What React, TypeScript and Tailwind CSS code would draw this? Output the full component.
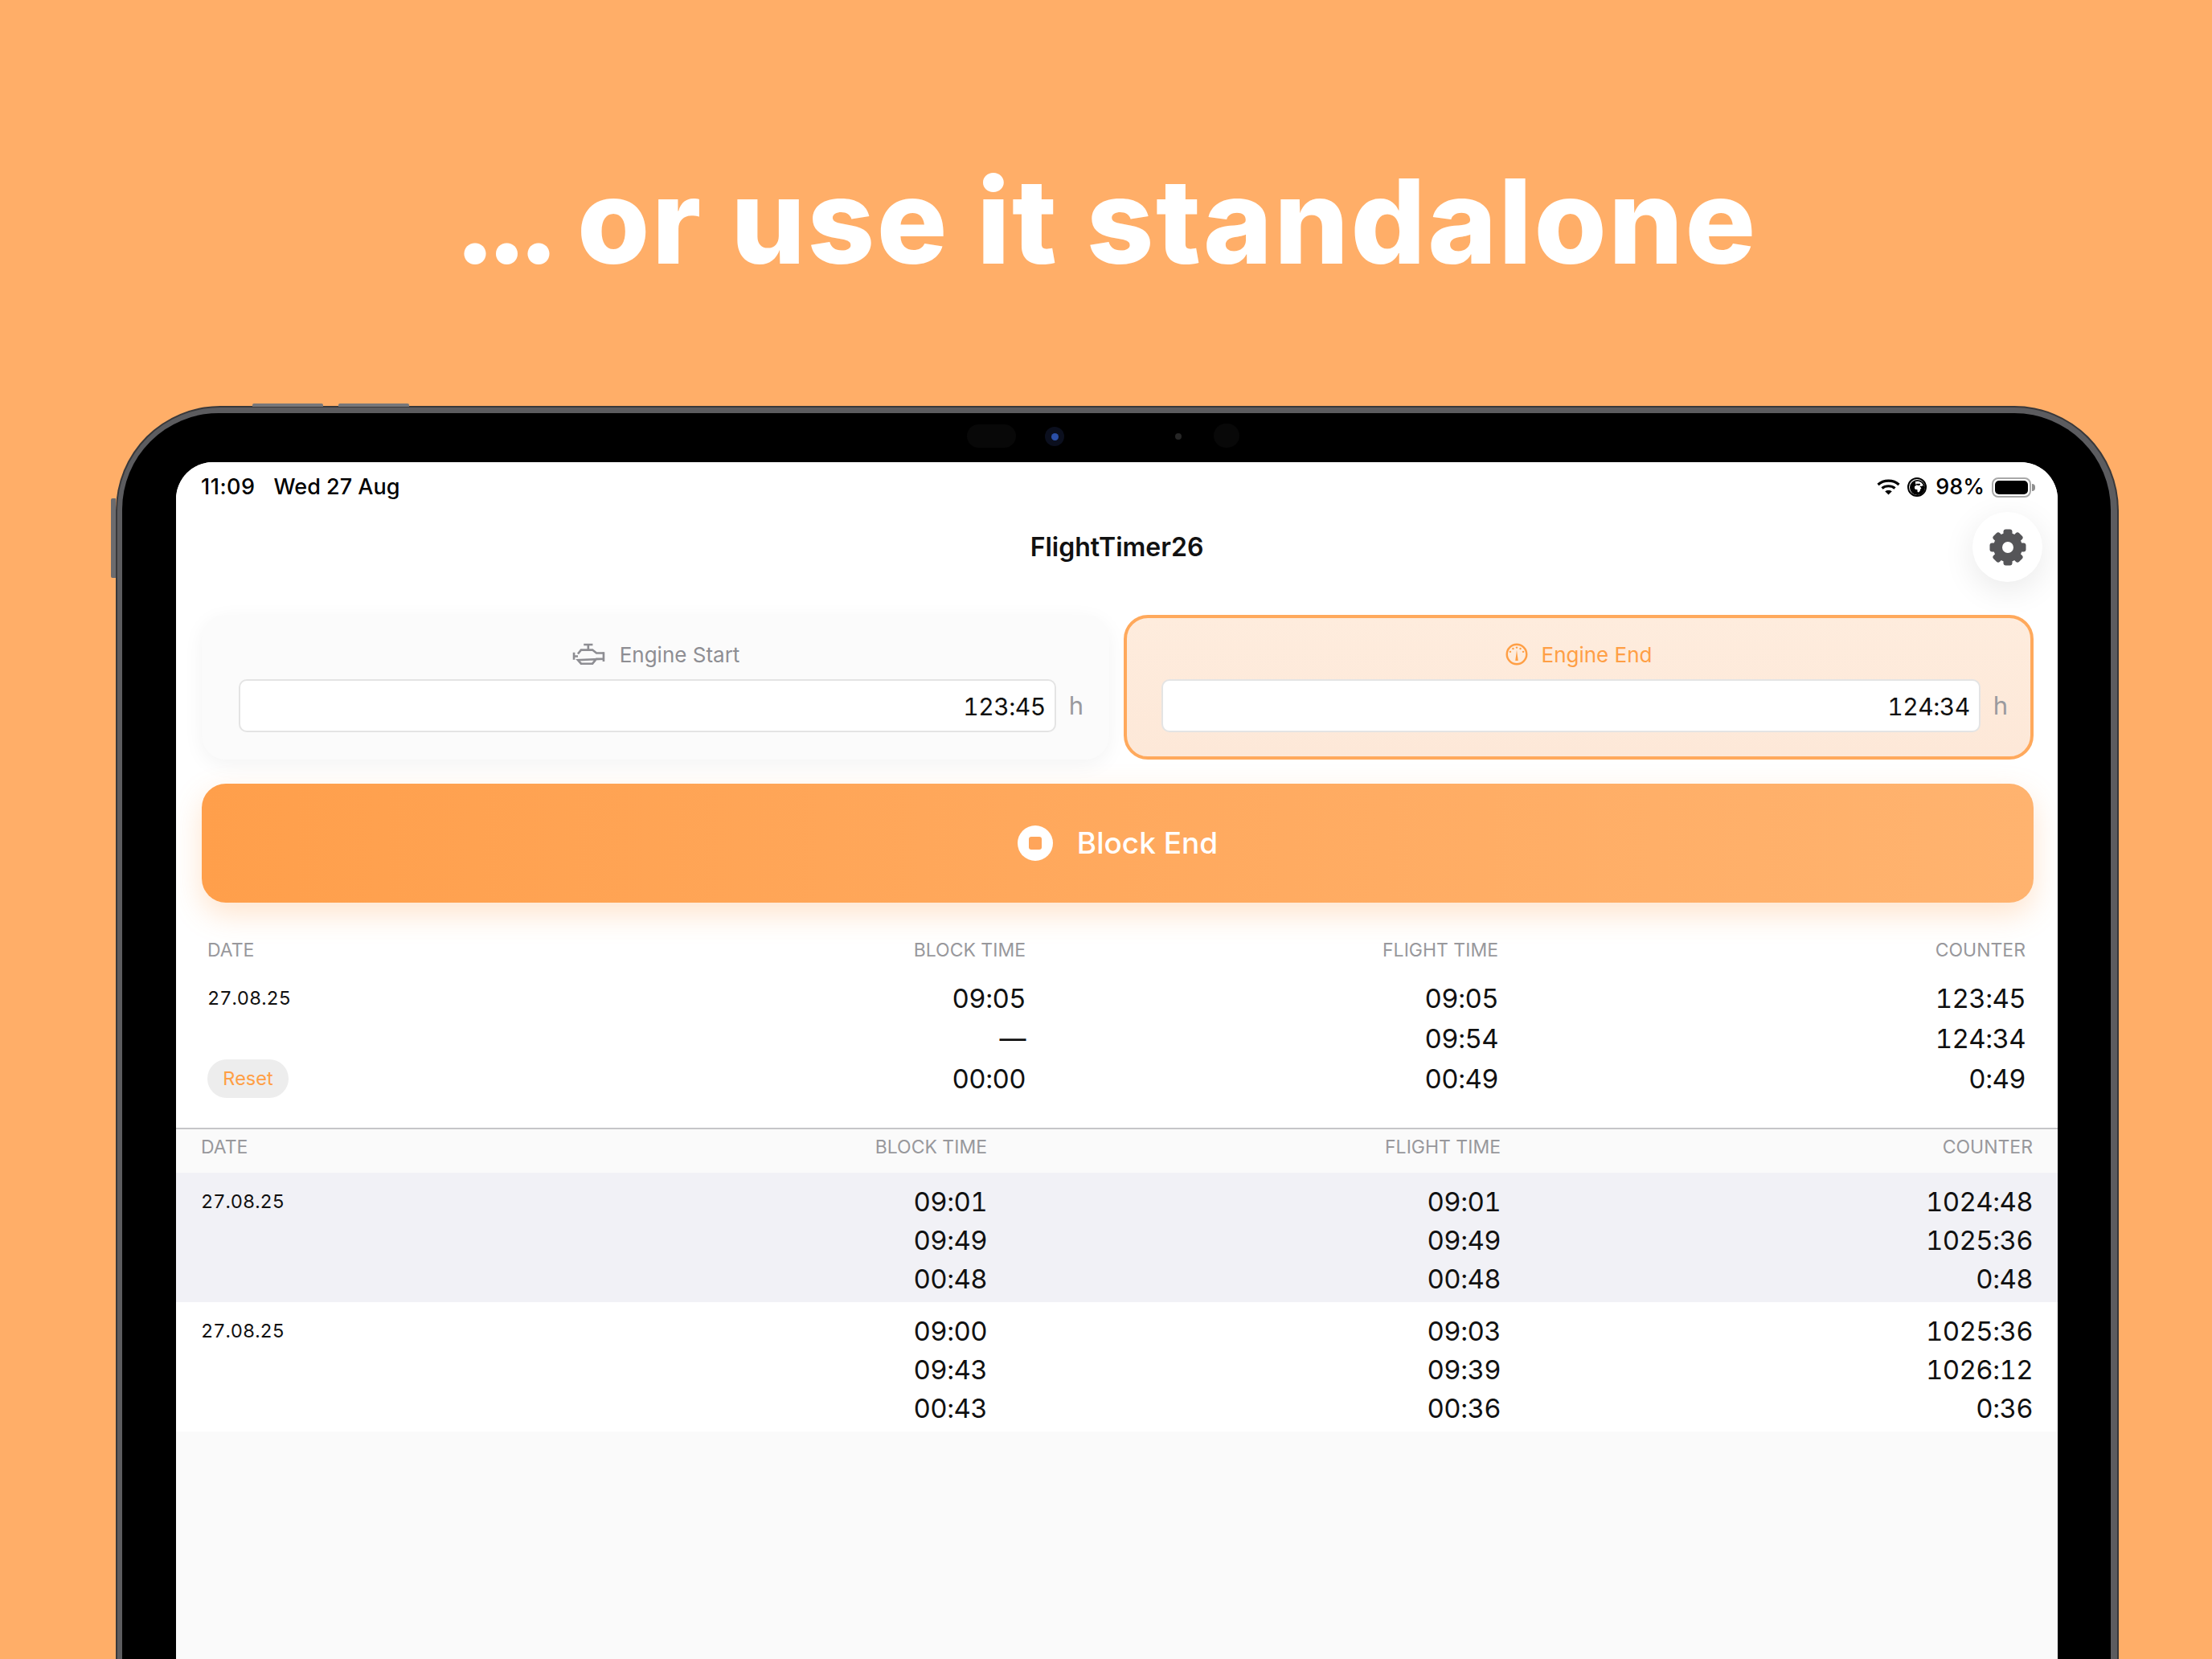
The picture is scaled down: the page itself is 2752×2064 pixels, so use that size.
import type { ReactNode } from "react";
import { FaEarthAfrica } from "react-icons/fa6";

const sans = "font-['Inter','Liberation_Sans',sans-serif]";

const liveRows = [
  ["09:05", "09:05", "123:45"],
  ["—", "09:54", "124:34"],
  ["00:00", "00:49", "0:49"],
];

const logRows = [
  {
    date: "27.08.25",
    shaded: true,
    rows: [
      ["09:01", "09:01", "1024:48"],
      ["09:49", "09:49", "1025:36"],
      ["00:48", "00:48", "0:48"],
    ],
  },
  {
    date: "27.08.25",
    shaded: false,
    rows: [
      ["09:00", "09:03", "1025:36"],
      ["09:43", "09:39", "1026:12"],
      ["00:43", "00:36", "0:36"],
    ],
  },
];

const EngineIcon = () => (
  <svg width="43" height="29" viewBox="36 14 130 88" fill="none" stroke="#8e8e93" strokeWidth="8">
    <path d="M82 20H116M99 20V40M45 50V77M45 64H60M157 48V84" />
    <path d="M60 55L72 40H115L130 52H157M157 74H130L115 92H72L60 78Z" />
  </svg>
);

const GaugeIcon = () => (
  <svg width="28" height="28" viewBox="40 35 80 80" fill="#ff9f45">
    <circle cx="80" cy="75" r="35" fill="none" stroke="#ff9f45" strokeWidth="7" />
    <circle cx="57" cy="66" r="3.5" />
    <circle cx="67" cy="55" r="3.5" />
    <circle cx="80" cy="51" r="3.5" />
    <circle cx="93" cy="55" r="3.5" />
    <circle cx="103" cy="66" r="3.5" />
    <polygon points="80,60 85,98 75,98" />
  </svg>
);

const GearIcon = () => (
  <svg width="46" height="46" viewBox="0 0 46 46" fill="#555558">
    {[0, 45, 90, 135, 180, 225, 270, 315].map((a) => (
      <rect key={a} x="17.5" y="0.5" width="11" height="12" rx="3" transform={`rotate(${a} 23 23)`} />
    ))}
    <circle cx="23" cy="23" r="12.5" fill="none" stroke="#555558" strokeWidth="11" />
  </svg>
);

const WifiIcon = () => (
  <svg width="29" height="20" viewBox="0 0 29 20" fill="none" stroke="#000" strokeWidth="3.2">
    <path d="M1.5 7C8.5 0.5 20.5 0.5 27.5 7" />
    <path d="M6.5 11.5C10.5 7.8 18.5 7.8 22.5 11.5" />
    <path d="M14.5 19.5L10.2 15.2C12.5 13.6 16.5 13.6 18.8 15.2Z" fill="#000" stroke="none" />
  </svg>
);

const Battery = () => (
  <div className="flex items-center">
    <div className="w-[49px] h-[25px] rounded-[8px] border-2 border-[#a8a8a8] p-[2px]">
      <div className="w-full h-full rounded-[5px] bg-black" />
    </div>
    <div className="w-[4px] h-[9px] rounded-r-full bg-[#8e8e8e] ml-[1px]" />
  </div>
);

const EngineCard = ({
  label,
  value,
  icon,
  active,
}: {
  label: string;
  value: string;
  icon: ReactNode;
  active?: boolean;
}) => (
  <div
    className={
      active
        ? "flex flex-col rounded-[30px] border-[4px] border-[#ffa95c] bg-gradient-to-b from-[#feecdd] to-[#fde8d8] pl-[43px] pr-[28px] pt-[31px]"
        : "flex flex-col rounded-[30px] bg-[#fbfbfb] shadow-[0_6px_26px_rgba(0,0,0,0.05)] pl-[46px] pr-[32px] pt-[35px]"
    }
  >
    <div
      className={`flex items-center justify-center gap-[17px] h-[28px] text-[26px] ${
        active ? "text-[#ff9f45] pr-[15px]" : "text-[#8e8e93] pr-[14px]"
      }`}
    >
      {icon}
      <span>{label}</span>
    </div>
    <div className="flex items-center gap-[16px] mt-[17px]">
      <div className="flex-1 h-[66px] flex items-center justify-end pt-[2px] pr-[11px] rounded-[10px] border-2 border-[#e4e4e4] bg-white text-[30px] tracking-[-0.5px] tabular-nums text-[#111]">
        {value}
      </div>
      <span className="text-[31px] text-[#9a9a9e]">h</span>
    </div>
  </div>
);

const Header = ({ cols }: { cols: string }) => (
  <div className={`grid ${cols} text-[23px] leading-[30px] text-[#98989c]`}>
    <span>DATE</span>
    <span className="text-right">BLOCK TIME</span>
    <span className="text-right">FLIGHT TIME</span>
    <span className="text-right">COUNTER</span>
  </div>
);

export default function App() {
  const liveCols = "grid-cols-[400px_618px_588px_656px]";
  const logCols = "grid-cols-[400px_578px_639px_662px]";

  return (
    <div className={`w-[2752px] h-[2064px] overflow-hidden bg-[#ffae68] flex flex-col ${sans}`}>
      <div className="h-[505px] shrink-0 flex justify-center pt-[177px]">
        <h1 className="text-[146px] leading-[196px] font-extrabold tracking-[2.5px] text-white h-[196px] whitespace-nowrap">
          <span className="tracking-[-12px]">...</span> or use it standalone
        </h1>
      </div>

      <div className="relative ml-[144px] w-[2492px] flex-1 flex flex-col rounded-t-[130px] bg-[#5c5c5f] border-2 border-b-0 border-[#38383a] pl-[6px] pr-[8px] pt-[7px]">
        {/* hardware buttons and camera */}
        <div className="absolute -top-[5px] left-[168px] w-[88px] h-[4px] rounded-t-[2px] bg-[#77777a]" />
        <div className="absolute -top-[5px] left-[275px] w-[88px] h-[4px] rounded-t-[2px] bg-[#77777a]" />
        <div className="absolute top-[113px] -left-[8px] w-[6px] h-[99px] rounded-l-[2px] bg-[#6b6b6e]" />

        <div className="relative flex-1 flex flex-col rounded-t-[120px] bg-black pl-[67px] pr-[66px] pt-[61px]">
          <div className="absolute top-[14px] left-[1051px] w-[61px] h-[29px] rounded-full bg-[#080808]" />
          <div className="absolute top-[17px] left-[1148px] w-[24px] h-[24px] rounded-full bg-[#0b0f1e] flex items-center justify-center">
            <div className="w-[9px] h-[9px] rounded-full bg-[#2b4fa8]" />
          </div>
          <div className="absolute top-[25px] left-[1310px] w-[8px] h-[8px] rounded-full bg-[#262626]" />
          <div className="absolute top-[13px] left-[1358px] w-[32px] h-[30px] rounded-full bg-[#080808]" />

          <div className="flex-1 flex flex-col overflow-hidden rounded-t-[46px] bg-[#fafafa]">
            <div className="bg-white">
              {/* status bar */}
              <div className="h-[62px] flex items-center justify-between pl-[31px] pr-[28px] text-[27px] font-medium text-black">
                <div className="flex gap-[23px]">
                  <span className="tracking-[0.5px]">11:09</span>
                  <span>Wed 27 Aug</span>
                </div>
                <div className="flex items-center">
                  <WifiIcon />
                  <div className="ml-[9px] w-[24px] h-[24px] rounded-full border-2 border-black flex items-center justify-center">
                    <FaEarthAfrica size={19} />
                  </div>
                  <span className="ml-[11px] mr-[9px]">98%</span>
                  <Battery />
                </div>
              </div>

              {/* nav bar */}
              <div className="relative h-[88px] flex items-center justify-center">
                <span className="text-[32px] font-semibold text-[#111]">FlightTimer26</span>
                <button className="absolute right-[19px] top-0 w-[87px] h-[87px] rounded-full bg-white shadow-[0_10px_40px_rgba(0,0,0,0.09)] flex items-center justify-center">
                  <GearIcon />
                </button>
              </div>

              {/* engine cards */}
              <div className="grid grid-cols-[1129px_1132px] gap-[18px] h-[180px] mt-[40px] pl-[32px] pr-[30px]">
                <EngineCard label="Engine Start" value="123:45" icon={<EngineIcon />} />
                <EngineCard label="Engine End" value="124:34" icon={<GaugeIcon />} active />
              </div>

              <div className="pl-[32px] pr-[30px] mt-[30px]">
                <button className="w-full h-[148px] rounded-[30px] bg-gradient-to-r from-[#ff9f4b] to-[#ffb36f] shadow-[0_14px_36px_rgba(255,159,74,0.28)] flex items-center justify-center gap-[30px] text-white text-[37px] font-medium">
                  <span className="w-[44px] h-[44px] rounded-full bg-white flex items-center justify-center">
                    <span className="w-[16px] h-[16px] rounded-[3px] bg-[#ffa55a]" />
                  </span>
                  Block End
                </button>
              </div>

              {/* running flight */}
              <div className="pl-[39px] pt-[44px] pb-[36px]">
                <Header cols={liveCols} />
                <div className={`grid ${liveCols} mt-[20px] text-[33px] leading-[50px] tracking-[-0.6px] tabular-nums text-[#111]`}>
                  {liveRows.map((row, i) => (
                    <div key={i} className="contents">
                      <div className="text-[23.5px] tracking-normal flex items-center">
                        {i === 0 && "27.08.25"}
                        {i === 2 && (
                          <span className="w-[101px] h-[48px] rounded-full bg-[#ededed] flex items-center justify-center text-[#ff9f45]">
                            Reset
                          </span>
                        )}
                      </div>
                      {row.map((v, j) => (
                        <span key={j} className="text-right">
                          {v}
                        </span>
                      ))}
                    </div>
                  ))}
                </div>
              </div>
            </div>

            {/* log */}
            <div className="border-t-2 border-[#c6c6c8] h-[56px] pl-[31px] pt-[7px]">
              <Header cols={logCols} />
            </div>
            {logRows.map((entry, k) => (
              <div
                key={k}
                className={`pl-[31px] pt-[12px] pb-[5px] h-[161px] ${entry.shaded ? "bg-[#f1f1f6]" : "bg-white"}`}
              >
                {entry.rows.map((row, i) => (
                  <div key={i} className={`grid ${logCols} text-[33px] leading-[48px] tracking-[-0.6px] tabular-nums text-[#111]`}>
                    <span className="text-[23.5px] tracking-normal">{i === 0 ? entry.date : ""}</span>
                    {row.map((v, j) => (
                      <span key={j} className="text-right">
                        {v}
                      </span>
                    ))}
                  </div>
                ))}
              </div>
            ))}
          </div>
        </div>
      </div>
    </div>
  );
}
